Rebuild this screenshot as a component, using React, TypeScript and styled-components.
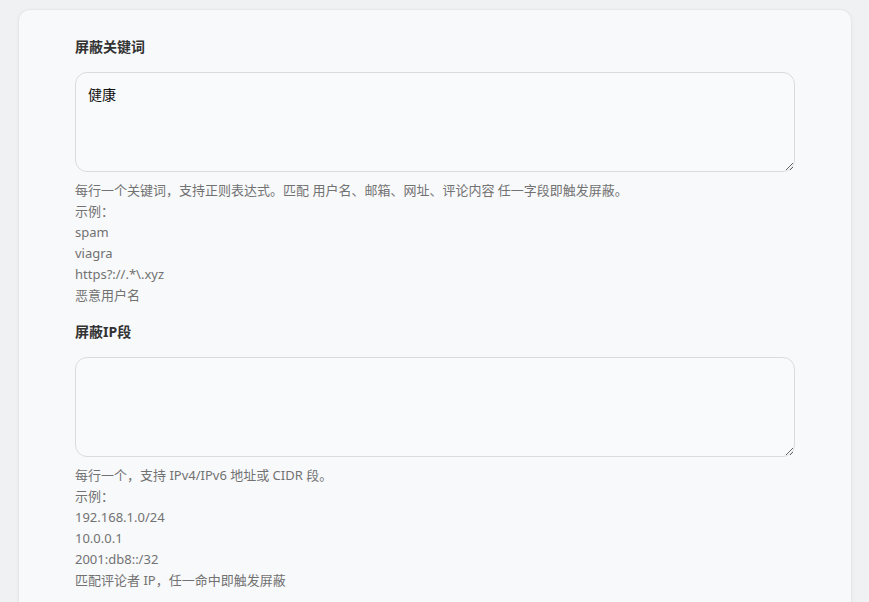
import styled, { createGlobalStyle } from 'styled-components'

const GlobalStyle = createGlobalStyle`
  html, body {
    margin: 0;
    background: #f0f1f3;
  }
  body {
    font-family: "Noto Sans", "Noto Sans CJK SC", sans-serif;
    color: #333;
  }
`

const Page = styled('main')`
  padding: 9px 17px 0 18px;
  height: 602px;
  box-sizing: border-box;
  overflow: hidden;
`

const Card = styled('section')`
  background: #f8f9fb;
  border: 1px solid #e6e7ea;
  border-radius: 12px;
  box-shadow: 0 1px 4px rgba(0, 0, 0, 0.04);
  padding: 27px 56px 40px 56px;
  min-height: 640px;
  box-sizing: border-box;
`

const Field = styled('div')`
  display: flex;
  flex-direction: column;
  margin-bottom: 16px;
`

const Label = styled('label')`
  font-size: 14px;
  font-weight: 700;
  line-height: 20px;
  color: #333;
  margin-bottom: 15px;
`

const TextArea = styled('textarea')`
  display: block;
  box-sizing: border-box;
  width: 100%;
  height: 100px;
  padding: 12px;
  border: 1px solid #d9dbe0;
  border-radius: 12px;
  background: #f9fafc;
  font-family: "Noto Sans", "Noto Sans CJK SC", sans-serif;
  font-size: 14px;
  line-height: 20px;
  color: #111;
  outline: none;
  resize: vertical;
`

const Help = styled('div')`
  margin-top: 8px;
  font-size: 13px;
  line-height: 21px;
  color: #727272;
`

const HelpLine = styled('div')`
  white-space: pre;
`

interface BlockProps {
  label: string
  value: string
  help: string[]
}

const Block = ({ label, value, help }: BlockProps): JSX.Element => (
  <Field>
    <Label>{label}</Label>
    <TextArea defaultValue={value} />
    <Help>
      {help.map((line, i) => <HelpLine key={i}>{line}</HelpLine>)}
    </Help>
  </Field>
)

const App = (): JSX.Element => (
  <>
    <GlobalStyle />
    <Page>
      <Card>
        <Block
          label='屏蔽关键词'
          value='健康'
          help={[
            '每行一个关键词，支持正则表达式。匹配 用户名、邮箱、网址、评论内容 任一字段即触发屏蔽。',
            '示例：',
            'spam',
            'viagra',
            'https?://.*\\.xyz',
            '恶意用户名'
          ]}
        />
        <Block
          label='屏蔽IP段'
          value=''
          help={[
            '每行一个，支持 IPv4/IPv6 地址或 CIDR 段。',
            '示例：',
            '192.168.1.0/24',
            '10.0.0.1',
            '2001:db8::/32',
            '匹配评论者 IP，任一命中即触发屏蔽'
          ]}
        />
      </Card>
    </Page>
  </>
)

export default App
